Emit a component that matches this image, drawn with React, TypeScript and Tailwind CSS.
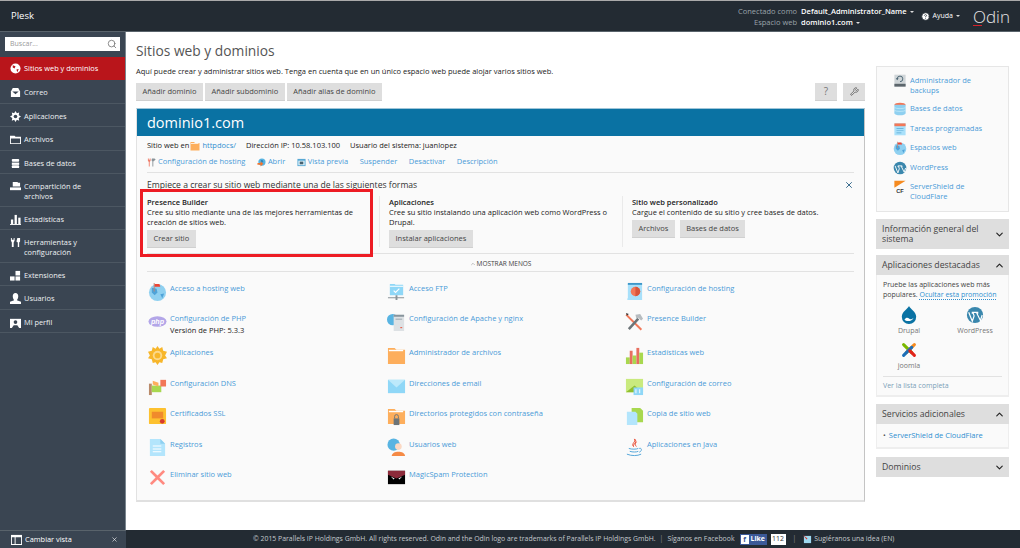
import React from "react";
import { ChevronDown, ChevronUp, HelpCircle, Search, Wrench, X } from "lucide-react";

const font = { fontFamily: '"Open Sans", "Noto Sans", sans-serif' };

// sidebar glyphs, white on slate
function SideIcon({ name }: { name: string }) {
  const p: Record<string, React.ReactNode> = {
    globe: <><circle cx="6" cy="6" r="5.5" fill="#fff" /><path d="M3 2.500l3 1-1 2.500-2-1zM7 7l2.500-.5L8 10z" fill="#b9151b" /></>,
    mail: <><path d="M3 1h6l2 4v6H1V5z" fill="#fff" /><path d="M2.500 5h7L6 8z" fill="#3a4552" /></>,
    apps: <><path d="M6 0l1.500 2.500L10 1.500 9.500 4.500 12 6 9.500 7.500 10 10.500 7.500 9.500 6 12 4.500 9.500 2 10.500 2.500 7.500 0 6 2.500 4.500 2 1.500 4.500 2.500z" fill="#fff" /><circle cx="6" cy="6" r="2" fill="#3a4552" /></>,
    folder: <path d="M0 2h5l1 1h6v8H0zM1 5v5h10V5z" fill="#fff" fillRule="evenodd" />,
    db: <><rect x="2" y="1" width="8" height="3" rx="1" fill="#fff" /><rect x="2" y="5" width="8" height="2.500" fill="#fff" /><rect x="2" y="8" width="8" height="3" rx="1" fill="#fff" /></>,
    share: <><path d="M3 1h5l1 1h2v4H3z" fill="#fff" /><path d="M0 7h12v3H0z" fill="#fff" /></>,
    stats: <><rect x="1" y="6" width="2.500" height="5" fill="#fff" /><rect x="5" y="1" width="2.500" height="10" fill="#fff" /><rect x="9" y="4" width="2.500" height="7" fill="#fff" /><rect x="0" y="11" width="12" height="1" fill="#fff" /></>,
    tools: <path d="M1 1v3l1 2v5h2V6l1-2V1H4v2H2V1zM8 1h3v4l-1 1v5H8.500V6L7 5z" fill="#fff" />,
    ext: <><rect x="0" y="7" width="5" height="4.500" fill="#fff" /><rect x="6" y="7" width="5" height="4.500" fill="#fff" /><rect x="6" y="1" width="5" height="5" fill="#fff" /></>,
    user: <path d="M6 0c2 0 3 1.500 3 3.500S8 7 7.500 8L12 9.500V12H0V9.500L4.500 8C4 7 3 5.500 3 3.500S4 0 6 0z" fill="#fff" />,
    profile: <><path d="M0 2h12v10H0z" fill="#fff" /><circle cx="6" cy="5.500" r="2" fill="#3a4552" /><path d="M2 12l2-3h4l2 3z" fill="#3a4552" /></>,
    view: <><path d="M0 1h12v11H0z" fill="#fff" /><path d="M1 3.500h3V11H1zM5 3.500h6V11H5z" fill="#3a4552" /></>,
  };
  return (
    <svg viewBox="0 0 12 12" className="w-[11px] h-[11px] shrink-0">
      {p[name]}
    </svg>
  );
}

// coloured feature icons, drawn roughly as in the Plesk set
function Tile({ name, size = 19 }: { name: string; size?: number }) {
  const p: Record<string, React.ReactNode> = {
    webhost: <><circle cx="10" cy="11" r="9" fill="#8fd0f0" /><path d="M4 6l5 1 1 4-3 3-3-3zM13 13l4-1-2 5z" fill="#4fa3d8" /><path d="M6 1h1v9H6z" fill="#b87" /><path d="M7 2h5l1 3H7z" fill="#ee4433" /></>,
    ftp: <><path d="M3 2h5l1 1h8v11H3z" fill="#8fd7f7" /><path d="M3 4h14v1H3z" fill="#fff" /><path d="M7 9l2 2 4-4" stroke="#fff" fill="none" strokeWidth="1.200" /><path d="M9 14h2v2h7v1h-7v2H9v-2H1v-1h8z" fill="#8a9499" /></>,
    conf: <><path d="M3 2h15v17H3l-1-1 1-1z" fill="#a8e0fa" /><path d="M3 1h15v2H3z" fill="#3d97c9" /><circle cx="11" cy="10" r="5" fill="#f27757" /><path d="M11 5a5 5 0 010 10z" fill="#d8543b" /></>,
    php: <><ellipse cx="10" cy="10" rx="9.500" ry="5.500" fill="#b3a6e8" /><text x="10" y="12.500" textAnchor="middle" fontSize="7.500" fontStyle="italic" fontWeight="700" fill="#fff" fontFamily="Liberation Sans">php</text></>,
    apache: <><circle cx="6" cy="8" r="6" fill="#58b4e2" /><path d="M7 3h11v17H7z" fill="#dde1e4" /><path d="M7 3h11v2H7zM9 7h7v1H9z" fill="#88949c" /><rect x="14" y="16" width="2" height="1" fill="#e8492f" /></>,
    hammer: <><path d="M2 2l16 16-1.500 1.500L.500 3.500z" fill="#f2795a" /><path d="M1 1l3 1-2 2z" fill="#333" /><path d="M3 17L13 6l2 2L5 19z" fill="#6c7478" /><path d="M11 3l5-1 3 5-2 2-3-3-2 1z" fill="#b7bcc0" /></>,
    gear: <><path d="M10 0l2 3 3-2 1 4 4 1-2 4 2 3-4 1-1 4-3-1-2 3-2-3-3 1-1-4-4-1 2-3-2-4 4-1 1-4 3 2z" fill="#f7b62a" /><circle cx="10" cy="10" r="5" fill="#fcd98a" /><circle cx="10" cy="10" r="3" fill="#f7b62a" /></>,
    folder: <><path d="M1 2h7l2 2h9v15H1z" fill="#fdae5c" /><path d="M2 4h15v1.500H2z" fill="#fff" /></>,
    chart: <><rect x="1" y="12" width="4" height="7" fill="#a8d84f" /><rect x="5" y="5" width="3" height="14" fill="#e86f5f" /><rect x="8" y="10" width="4" height="9" fill="#a8d84f" /><rect x="12" y="2" width="3" height="17" fill="#e86f5f" /><rect x="15" y="7" width="4" height="12" fill="#a8d84f" /></>,
    dns: <><rect x="1" y="7" width="3" height="12" fill="#b98a6a" /><rect x="4" y="9" width="10" height="7" fill="#a8d84f" /><path d="M13 3h6v7h-6z" fill="#f27757" /><path d="M5 4l6 2v4l-6-2z" fill="#fdae5c" /></>,
    mail: <><rect x="1" y="3" width="18" height="14" fill="#8fd7f7" /><path d="M1 3l9 8 9-8z" fill="#bde9fb" /></>,
    mailconf: <><rect x="1" y="2" width="18" height="14" fill="#c9ea7e" /><path d="M1 16l9-7 9 7z" fill="#8fbe2f" /><rect x="9" y="11" width="10" height="8" fill="#8fd7f7" /><path d="M11 13h1v4h-1zM15 13h1v4h-1z" fill="#fff" /></>,
    ssl: <><rect x="1" y="1" width="18" height="17" rx="1" fill="#fdc12f" /><rect x="4" y="5" width="12" height="7" fill="#f08a2c" /><circle cx="15" cy="15" r="2.500" fill="#d73a2f" /></>,
    folderlock: <><path d="M1 2h7l2 2h9v14H1z" fill="#fdae5c" /><path d="M2 4h15v1.500H2z" fill="#fff" /><rect x="7" y="12" width="6" height="7" fill="#6c7478" /><path d="M8 12V10a2 2 0 014 0v2" stroke="#6c7478" fill="none" /></>,
    copy: <><path d="M7 1h9l3 3v12H7z" fill="#a8d84f" /><path d="M2 5h9l2 2v12H2z" fill="#b3e5fc" /></>,
    logs: <><path d="M2 1h11l5 5v13H2z" fill="#b3e5fc" /><path d="M13 1l5 5h-5z" fill="#8fd0f0" /><path d="M5 8h9v1H5zM5 11h9v1H5zM5 14h9v1H5z" fill="#fff" /></>,
    webuser: <><circle cx="7" cy="7" r="6.500" fill="#58b4e2" /><circle cx="12" cy="9" r="3.500" fill="#fbd9c4" /><path d="M5 19c0-6 14-6 14 0z" fill="#f58a45" /></>,
    java: <><path d="M10 1c2 3-4 5-1 8 -1-3 5-4 1-8zM12 4c-2 2-1 4 0 5" stroke="#e8492f" fill="none" /><path d="M4 11c3 1 8 1 10 0M5 14c3 1 7 1 9 0M2 17c5 2 11 2 15 0M15 11c3-1 3 3 0 4" stroke="#4fa3d8" fill="none" /></>,
    del: <path d="M2 4l2-2 6 6 6-6 2 2-6 6 6 6-2 2-6-6-6 6-2-2 6-6z" fill="#ff8a80" />,
    spam: <><rect x="1" y="3" width="18" height="14" fill="#000" /><path d="M1 3h18v4l-9 4-9-4z" fill="#8c2b3a" /><path d="M4 9l4 2-1 1zM16 9l-4 2 1 1z" fill="#fff" /></>,
    backup: <><rect x="2" y="1" width="16" height="17" fill="#cfd5d8" /><rect x="2" y="14" width="16" height="4" fill="#5c666c" /><path d="M6 7a4 4 0 114 4" stroke="#47616f" fill="none" strokeWidth="1.300" /><path d="M4 6h4l-2 3z" fill="#47616f" /></>,
    db: <><ellipse cx="10" cy="4" rx="8" ry="3" fill="#f27757" /><path d="M2 4h16v12H2z" fill="#8fd0f0" /><ellipse cx="10" cy="16" rx="8" ry="3" fill="#8fd0f0" /><path d="M2 8c3 2 13 2 16 0M2 12c3 2 13 2 16 0" stroke="#c9ecfb" fill="none" /></>,
    tasks: <><rect x="2" y="2" width="16" height="17" fill="#a8e0fa" /><rect x="2" y="2" width="16" height="4" fill="#f27757" /><path d="M5 9h10v1H5zM5 12h10v1H5zM5 15h7v1H5z" fill="#58a8d4" /></>,
    wp: <><circle cx="10" cy="10" r="9" fill="#3a87ad" /><path d="M3 7l4 10 2-6-1-3h-1V7h6v1h-1l4 8 2-6" stroke="#fff" strokeWidth="1.300" fill="none" /></>,
    cf: <><path d="M2 1h16L2 11z" fill="#f58a1f" /><text x="10" y="18" textAnchor="middle" fontSize="8" fontWeight="700" fill="#333" fontFamily="Liberation Sans">CF</text></>,
    drupal: <><path d="M10 0c1 3 8 6 8 12a8 8 0 01-16 0C2 6 9 3 10 0z" fill="#0a72a3" /><path d="M5 15c2-3 4-2 5-1s3 1 5-1c-1 4-8 5-10 2z" fill="#fff" /></>,
    joomla: (
      <g fill="none" strokeWidth="3.400" strokeLinecap="round">
        <path d="M4 4l9 9" stroke="#7ab800" />
        <path d="M16 4l-9 9" stroke="#f58a1f" />
        <path d="M4 16l5-5 4-4" stroke="#1c6fb8" />
        <path d="M16 16l-5-5" stroke="#e2231a" />
      </g>
    ),
    hostcfg: <><path d="M2 1h2v3h2V1h2v5L6 9v10H4V9L2 6z" fill="#ef7f6c" /><path d="M11 1h3c3 0 5 1 5 3l-5 4v11h-2V8l-2-3z" fill="#8a9499" /></>,
    open: <><circle cx="11" cy="9" r="8" fill="#58b4e2" /><path d="M8 4l5 1 1 4-4 2z" fill="#2f86ba" /><path d="M1 11h7V7l6 6-6 6v-4H1z" fill="#f0742f" /></>,
    preview: <><rect x="1" y="2" width="18" height="16" fill="#58a8d4" /><rect x="3" y="6" width="14" height="10" fill="#dff3fc" /><rect x="6" y="8" width="8" height="6" fill="#47616f" /></>,
  };
  return (
    <svg viewBox="0 0 20 20" width={size} height={size} className="shrink-0">
      {p[name]}
    </svg>
  );
}

const nav = [
  ["globe", "Sitios web y dominios"],
  ["mail", "Correo"],
  ["apps", "Aplicaciones"],
  ["folder", "Archivos"],
  ["db", "Bases de datos"],
  ["share", "Compartición de archivos"],
  ["stats", "Estadísticas"],
  ["tools", "Herramientas y configuración"],
  ["ext", "Extensiones"],
  ["user", "Usuarios"],
  ["profile", "Mi perfil"],
];

const tools = [
  ["webhost", "Acceso a hosting web"],
  ["ftp", "Acceso FTP"],
  ["conf", "Configuración de hosting"],
  ["php", "Configuración de PHP"],
  ["apache", "Configuración de Apache y nginx"],
  ["hammer", "Presence Builder"],
  ["gear", "Aplicaciones"],
  ["folder", "Administrador de archivos"],
  ["chart", "Estadísticas web"],
  ["dns", "Configuración DNS"],
  ["mail", "Direcciones de email"],
  ["mailconf", "Configuración de correo"],
  ["ssl", "Certificados SSL"],
  ["folderlock", "Directorios protegidos con contraseña"],
  ["copy", "Copia de sitio web"],
  ["logs", "Registros"],
  ["webuser", "Usuarios web"],
  ["java", "Aplicaciones en Java"],
  ["del", "Eliminar sitio web"],
  ["spam", "MagicSpam Protection"],
];

const shortcuts = [
  ["backup", "Administrador de backups"],
  ["db", "Bases de datos"],
  ["tasks", "Tareas programadas"],
  ["webhost", "Espacios web"],
  ["wp", "WordPress"],
  ["cf", "ServerShield de CloudFlare"],
];

function Btn({ children }: { children: React.ReactNode }) {
  return (
    <span className="h-[18px] px-[6.5px] bg-[#dedede] text-[#444] text-[7.5px] flex items-center justify-center border-b border-[#d0d0d0] whitespace-nowrap">
      {children}
    </span>
  );
}

function Caret() {
  return <span className="inline-block ml-[3px] align-middle border-x-[2px] border-x-transparent border-t-[2px] border-t-[#ddd]" />;
}

function AccordionHead({ title, open, tall }: { title: string; open?: boolean; tall?: boolean }) {
  return (
    <div className={`bg-[#dedede] flex justify-between items-center pl-[6px] pr-[4px] text-[8.7px] leading-[10px] text-[#444] ${tall ? "h-[30px]" : "h-[20px]"}`}>
      <span className="w-[110px]">{title}</span>
      {open ? <ChevronUp size={11} color="#222" strokeWidth={2.5} /> : <ChevronDown size={11} color="#222" strokeWidth={2.5} />}
    </div>
  );
}

export default function App() {
  return (
    <div style={font} className="w-[1020px] h-[548px] flex flex-col overflow-hidden bg-white text-[7.5px] text-[#222]">
      <header className="h-[32px] shrink-0 bg-[#232b33] border-t border-t-[#aaa] border-b border-b-[#59636b] flex items-center pl-[11px] pr-[10px] text-white">
        <span className="text-[9.5px] flex-1">Plesk</span>
        <div className="grid grid-cols-[auto_auto] gap-x-[4px] leading-[11px] text-[7.5px] mt-[1px]">
          <span className="text-right text-[#9aa3aa]">Conectado como</span>
          <span className="font-semibold">Default_Administrator_Name<Caret /></span>
          <span className="text-right text-[#9aa3aa]">Espacio web</span>
          <span className="font-semibold">dominio1.com<Caret /></span>
        </div>
        <HelpCircle size={9} className="ml-[7px] fill-white text-[#232b33]" />
        <span className="ml-[3px] text-[7px]">Ayuda<Caret /></span>
        <span className="ml-[13px] text-[17px] leading-none font-light text-[#e6e6e6] relative">
          Odin
          <span className="absolute left-0 bottom-[-1px] w-[9px] h-[1px] bg-[#d4202a]" />
        </span>
      </header>

      <div className="flex-1 flex min-h-0">
        <aside className="w-[126px] shrink-0 bg-[#3a4552] border-r border-r-[#7a858e] flex flex-col">
          <div className="h-[25px] flex items-start pt-[5px] px-[5px]">
            <div className="w-[115px] h-[14px] bg-white flex items-center justify-between pl-[5px] pr-[3px] text-[#999] text-[7px]">
              Buscar...
              <Search size={10} color="#777" />
            </div>
          </div>
          {nav.map(([icon, label], i) => (
            <div
              key={label}
              className={`flex items-start gap-[3px] pl-[10px] pr-[20px] leading-[10px] text-[7.4px] font-medium ${i === 0 ? "py-[6px] bg-[#b9151b] text-white" : "pt-[7px] pb-[4.5px] text-[#eef1f3] border-b border-b-[#4c5762]"}`}
            >
              <SideIcon name={icon} />
              <span>{label}</span>
            </div>
          ))}
        </aside>

        <main className="flex-1 flex gap-[11px] pl-[10px] pr-[11px] min-w-0">
          <div className="w-[729px] shrink-0 flex flex-col">
            <h1 className="text-[13.8px] leading-[20px] mt-[9px] text-[#555]">Sitios web y dominios</h1>
            <p className="mt-[5px] leading-[10px]">
              Aquí puede crear y administrar sitios web. Tenga en cuenta que en un único espacio web puede alojar varios sitios web.
            </p>
            <div className="flex gap-[2px] mt-[7px]">
              <Btn>Añadir dominio</Btn>
              <Btn>Añadir subdominio</Btn>
              <Btn>Añadir alias de dominio</Btn>
              <span className="flex-1" />
              <span className="w-[22px] flex"><span className="flex-1 h-[18px] bg-[#dedede] flex items-center justify-center text-[10px] text-[#777] border-b border-[#d0d0d0]">?</span></span>
              <span className="w-[2px]" />
              <span className="w-[22px] h-[18px] bg-[#dedede] flex items-center justify-center border-b border-[#d0d0d0]"><Wrench size={9} color="#555" /></span>
            </div>

            <section className="mt-[7px] h-[394px] bg-[#fafafa] border-t border-t-[#9fc5d8] border-x border-x-[#e2e2e2] border-r-[#c4c4c4] border-b-2 border-b-[#e0e0e0]">
              <div className="h-[27px] bg-[#0a72a3] text-white text-[14.5px] flex items-center pl-[10px]">dominio1.com</div>
              <div className="px-[10px]">
                <div className="flex items-center h-[10px] mt-[5px]">
                  <span>Sitio web en</span>
                  <span className="ml-[1px]"><Tile name="folder" size={10} /></span>
                  <span className="text-[#2f8fd0] ml-[2px]">httpdocs/</span>
                  <span className="ml-[10px]">Dirección IP: 10.58.103.100</span>
                  <span className="ml-[10px]">Usuario del sistema: juanlopez</span>
                </div>
                <div className="flex items-center h-[10px] mt-[6px] text-[#4a9bd8] gap-[11.5px] border-0">
                  <span className="flex items-center gap-[2px]"><Tile name="hostcfg" size={9} />Configuración de hosting</span>
                  <span className="flex items-center gap-[2px]"><Tile name="open" size={9} />Abrir</span>
                  <span className="flex items-center gap-[2px]"><Tile name="preview" size={9} />Vista previa</span>
                  <span>Suspender</span>
                  <span>Desactivar</span>
                  <span>Descripción</span>
                </div>
                <div className="mt-[5px] border-t border-t-[#e2e2e2]" />

                <div className="relative">
                  <div className="flex justify-between items-center h-[24px] text-[8.6px] text-[#333]">
                    Empiece a crear su sitio web mediante una de las siguientes formas
                    <X size={10} color="#14507a" strokeWidth={2} />
                  </div>
                  <div className="grid grid-cols-[242px_243px_1fr] h-[56px]">
                    <div className="pr-[10px]">
                      <div className="font-semibold leading-[10px]">Presence Builder</div>
                      <div className="leading-[10px]">Cree su sitio mediante una de las mejores herramientas de creación de sitios web.</div>
                      <div className="flex mt-[3px]"><Btn>Crear sitio</Btn></div>
                    </div>
                    <div className="pr-[10px]">
                      <div className="font-semibold leading-[10px]">Aplicaciones</div>
                      <div className="leading-[10px]">Cree su sitio instalando una aplicación web como WordPress o Drupal.</div>
                      <div className="flex mt-[3px]"><Btn>Instalar aplicaciones</Btn></div>
                    </div>
                    <div>
                      <div className="font-semibold leading-[10px]">Sitio web personalizado</div>
                      <div className="leading-[10px]">Cargue el contenido de su sitio y cree bases de datos.</div>
                      <div className="flex gap-[5px] mt-[3px]"><Btn>Archivos</Btn><Btn>Bases de datos</Btn></div>
                    </div>
                  </div>
                  <span className="absolute left-[232px] top-[23px] h-[51px] w-[1px] bg-[#eaeaea]" />
                  <span className="absolute left-[475px] top-[23px] h-[51px] w-[1px] bg-[#eaeaea]" />
                  <span className="absolute left-[-7px] top-[16px] w-[233px] h-[68px] border-[3px] border-[#ed1c24]" />
                </div>

                <div className="border-t border-t-[#e2e2e2] h-[18px] pt-[2px] flex items-center justify-center text-[6.5px] text-[#444]">
                  <ChevronUp size={6} className="mr-[1px]" color="#888" />MOSTRAR MENOS
                </div>
                <div className="border-t border-t-[#e2e2e2]" />

                <div className="grid grid-cols-[239px_238px_1fr] grid-rows-[30px_34px_31px_30px_31px_30px_30px] mt-[10px] pl-[1px]">
                  {tools.map(([icon, label]) => (
                    <div key={label} className="flex items-start gap-[3px]">
                      <Tile name={icon} />
                      <div className="text-[#4a9bd8] leading-[11px] mt-[1px]">
                        {label}
                        {label === "Configuración de PHP" && <div className="text-[#222] mt-[1px]">Versión de PHP: 5.3.3</div>}
                      </div>
                    </div>
                  ))}
                </div>
              </div>
            </section>
          </div>

          <div className="flex-1 flex flex-col">
            <div className="mt-[34px] h-[146px] bg-[#fafafa] border border-[#e6e6e6] pl-[16px] pr-[20px] pt-[7px] flex flex-col gap-[5.5px]">
              {shortcuts.map(([icon, label], i) => (
                <div key={label} className={`flex items-start gap-[3px] text-[#4a9bd8] leading-[10px] ${i === 0 ? "mb-[1.5px]" : ""}`}>
                  <Tile name={icon} size={14} />
                  <span className="mt-[1px]">{label}</span>
                </div>
              ))}
            </div>

            <div className="mt-[7px]"><AccordionHead title="Información general del sistema" tall /></div>

            <div className="mt-[6px]"><AccordionHead title="Aplicaciones destacadas" open /></div>
            <div className="h-[122px] bg-[#fafafa] border-x border-b-2 border-[#eeeeee] px-[6px] pt-[4.5px] text-[#444] text-[7px]">
              <div className="leading-[10px]">
                Pruebe las aplicaciones web más populares. <span className="text-[#2f8fd0] underline decoration-dotted underline-offset-2">Ocultar esta promoción</span>
              </div>
              <div className="grid grid-cols-[54px_78px] mt-[6.5px] -ml-[1px] auto-rows-[35px] text-center text-[#777] w-[120px]">
                <div className="flex flex-col items-center"><Tile name="drupal" size={18} /><span className="mt-[2px]">Drupal</span></div>
                <div className="flex flex-col items-center"><Tile name="wp" size={18} /><span className="mt-[2px]">WordPress</span></div>
                <div className="flex flex-col items-center"><Tile name="joomla" size={18} /><span className="mt-[2px]">joomla</span></div>
              </div>
              <div className="border-t border-t-[#e2e2e2] pt-[4px] text-[#7a9fb8]">Ver la lista completa</div>
            </div>

            <div className="mt-[7px]"><AccordionHead title="Servicios adicionales" open /></div>
            <div className="h-[25px] bg-[#fafafa] border-x border-b-2 border-[#eeeeee] px-[6px] flex items-center text-[#2f8fd0]">
              <span className="text-[#555] mr-[3px]">•</span>ServerShield de CloudFlare
            </div>

            <div className="mt-[8px]"><AccordionHead title="Dominios" /></div>
          </div>
        </main>
      </div>

      <footer className="h-[18px] shrink-0 flex bg-[#232b33] text-[#c4c9cd] text-[6.9px]">
        <div className="w-[126px] shrink-0 bg-[#3a4552] border-t border-t-[#59636b] flex items-center pl-[11px] pr-[8px] text-white font-medium text-[7.4px]">
          <SideIcon name="view" />
          <span className="ml-[3px] flex-1">Cambiar vista</span>
          <X size={7} color="#fff" />
        </div>
        <div className="flex-1 flex items-center pl-[127px] whitespace-nowrap">
          <span>© 2015 Parallels IP Holdings GmbH. All rights reserved. Odin and the Odin logo are trademarks of Parallels IP Holdings GmbH.</span>
          <span className="mx-[4px] text-[#888]">|</span>
          <span>Síganos en Facebook</span>
          <span className="ml-[5px] h-[11px] w-[27px] bg-[#3b5998] text-white flex items-center px-[1px] font-bold">
            <span className="bg-white text-[#3b5998] w-[8px] h-[9px] leading-[10px] text-center mr-[2px]">f</span>Like
          </span>
          <span className="ml-[4px] h-[11px] w-[15px] justify-center bg-white text-[#333] flex items-center">112</span>
          <span className="mx-[7px] text-[#888]">|</span>
          <svg viewBox="0 0 10 10" className="w-[9px] h-[9px] mr-[2px]"><path d="M1 1h8v8H1z" fill="#9fd8ef" /><path d="M0 0l5 4-1 1z" fill="#d8352a" /></svg>
          <span>Sugiéranos una idea (EN)</span>
        </div>
      </footer>
    </div>
  );
}
